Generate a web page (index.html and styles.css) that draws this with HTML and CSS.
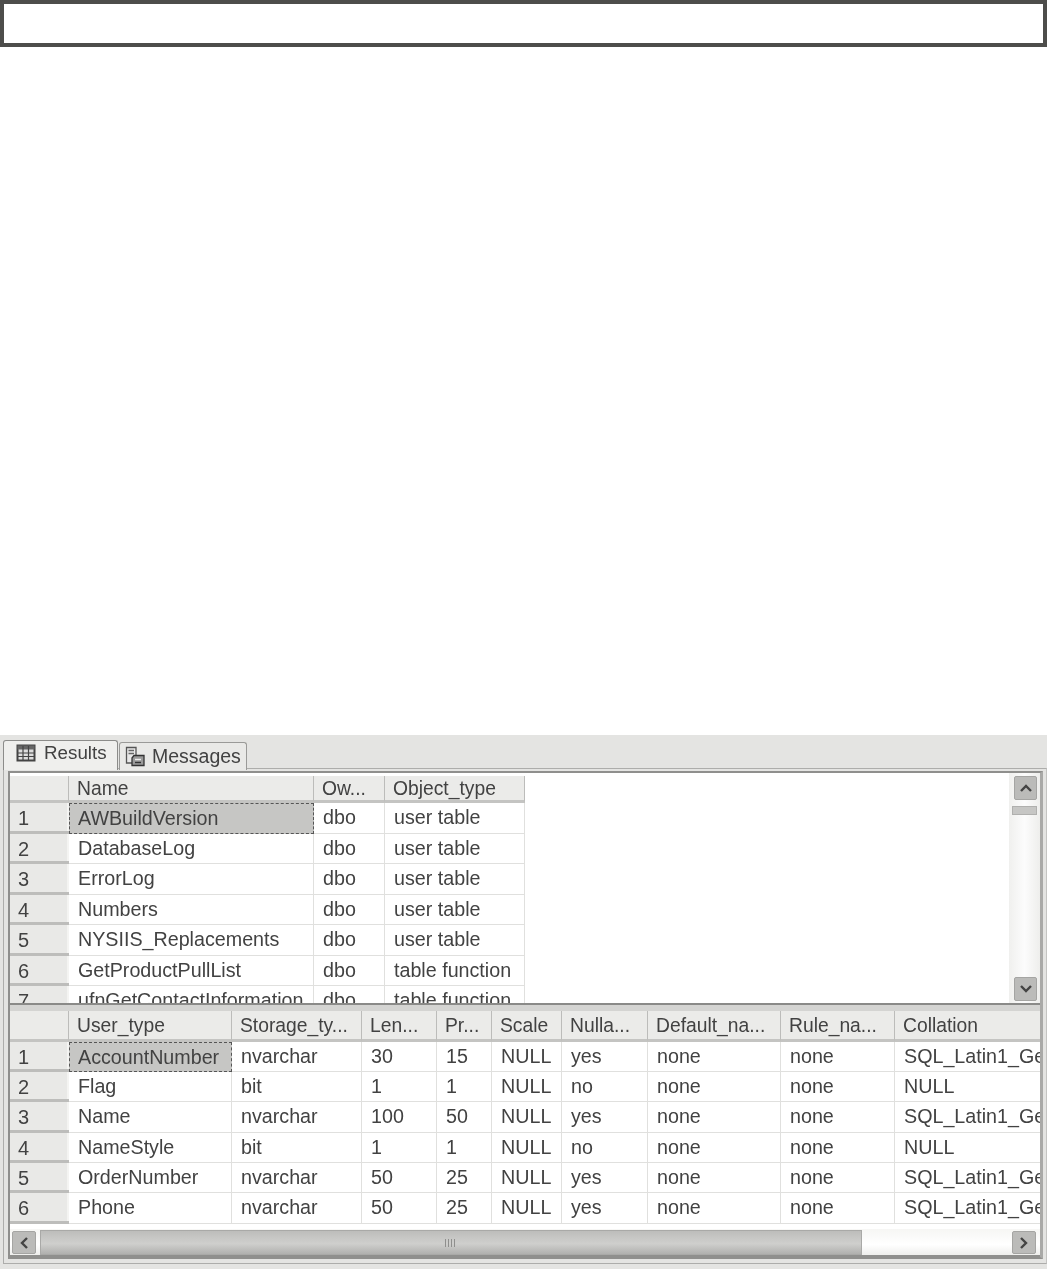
FILE: index.html
```html
<!DOCTYPE html>
<html lang="en">
<head>
<meta charset="utf-8">
<title>Results</title>
<link rel="stylesheet" href="styles.css">
</head>
<body>
<div class="topbox"></div>
<section class="panel">
  <div class="tabs">
    <div class="tab tab-active">
      <svg class="ico" width="20" height="18" viewBox="0 0 20 18"><rect x="1.5" y="1.5" width="17" height="15" fill="#ddd" stroke="#444" stroke-width="2"/><rect x="1.5" y="1.5" width="17" height="4" fill="#666"/><path d="M1.5 9H18.5M1.5 12.5H18.5M7 2V16M12.5 2V16" stroke="#444" stroke-width="1.2" fill="none"/></svg>
      <span>Results</span>
    </div>
    <div class="tab tab-msg">
      <svg class="ico" width="22" height="21" viewBox="0 0 22 21"><path d="M1.5 1.5H11V17H1.5Z" fill="#e8e8e8" stroke="#555" stroke-width="1.3"/><path d="M3.5 4.5H9M3.5 7.5H9" stroke="#666" stroke-width="1.4"/><path d="M7 12L9 9.5H19V19.5H7Z" fill="#9a9a9a" stroke="#333" stroke-width="1.3"/><path d="M10 13.5H16" stroke="#eee" stroke-width="1.4"/><path d="M10 16.5H16" stroke="#333" stroke-width="1.4"/></svg>
      <span>Messages</span>
    </div>
  </div>
  <div class="page">
    <div class="frame">
      <div class="pane pane-top">
        <div class="grid grid-top">
          <div class="hd"></div><div class="hd">Name</div><div class="hd">Ow...</div><div class="hd">Object_type</div>
          <div class="rh">1</div><div class="c sel">AWBuildVersion</div><div class="c">dbo</div><div class="c">user table</div>
          <div class="rh">2</div><div class="c">DatabaseLog</div><div class="c">dbo</div><div class="c">user table</div>
          <div class="rh">3</div><div class="c">ErrorLog</div><div class="c">dbo</div><div class="c">user table</div>
          <div class="rh">4</div><div class="c">Numbers</div><div class="c">dbo</div><div class="c">user table</div>
          <div class="rh">5</div><div class="c">NYSIIS_Replacements</div><div class="c">dbo</div><div class="c">user table</div>
          <div class="rh">6</div><div class="c">GetProductPullList</div><div class="c">dbo</div><div class="c">table function</div>
          <div class="rh">7</div><div class="c">ufnGetContactInformation</div><div class="c">dbo</div><div class="c">table function</div>
        </div>
        <div class="vscroll">
          <div class="sbtn"><svg width="16" height="10" viewBox="0 0 16 10"><path d="M3 8L8 3L13 8" fill="none" stroke="#444" stroke-width="2.4"/></svg></div>
          <div class="vthumb"></div>
          <div class="vtrack"></div>
          <div class="sbtn"><svg width="16" height="10" viewBox="0 0 16 10"><path d="M3 2L8 7L13 2" fill="none" stroke="#444" stroke-width="2.4"/></svg></div>
        </div>
      </div>
      <div class="pane pane-bottom">
        <div class="grid grid-bottom">
          <div class="hd"></div><div class="hd">User_type</div><div class="hd">Storage_ty...</div><div class="hd">Len...</div><div class="hd">Pr...</div><div class="hd">Scale</div><div class="hd">Nulla...</div><div class="hd">Default_na...</div><div class="hd">Rule_na...</div><div class="hd">Collation</div>
          <div class="rh">1</div><div class="c sel">AccountNumber</div><div class="c">nvarchar</div><div class="c">30</div><div class="c">15</div><div class="c">NULL</div><div class="c">yes</div><div class="c">none</div><div class="c">none</div><div class="c">SQL_Latin1_General</div>
          <div class="rh">2</div><div class="c">Flag</div><div class="c">bit</div><div class="c">1</div><div class="c">1</div><div class="c">NULL</div><div class="c">no</div><div class="c">none</div><div class="c">none</div><div class="c">NULL</div>
          <div class="rh">3</div><div class="c">Name</div><div class="c">nvarchar</div><div class="c">100</div><div class="c">50</div><div class="c">NULL</div><div class="c">yes</div><div class="c">none</div><div class="c">none</div><div class="c">SQL_Latin1_General</div>
          <div class="rh">4</div><div class="c">NameStyle</div><div class="c">bit</div><div class="c">1</div><div class="c">1</div><div class="c">NULL</div><div class="c">no</div><div class="c">none</div><div class="c">none</div><div class="c">NULL</div>
          <div class="rh">5</div><div class="c">OrderNumber</div><div class="c">nvarchar</div><div class="c">50</div><div class="c">25</div><div class="c">NULL</div><div class="c">yes</div><div class="c">none</div><div class="c">none</div><div class="c">SQL_Latin1_General</div>
          <div class="rh">6</div><div class="c">Phone</div><div class="c">nvarchar</div><div class="c">50</div><div class="c">25</div><div class="c">NULL</div><div class="c">yes</div><div class="c">none</div><div class="c">none</div><div class="c">SQL_Latin1_General</div>
        </div>
        <div class="hscroll">
          <div class="sbtn hbtn"><svg width="10" height="16" viewBox="0 0 10 16"><path d="M8 3L3 8L8 13" fill="none" stroke="#444" stroke-width="2.4"/></svg></div>
          <div class="hthumb"><span class="grip"></span></div>
          <div class="htrack"></div>
          <div class="sbtn hbtn"><svg width="10" height="16" viewBox="0 0 10 16"><path d="M2 3L7 8L2 13" fill="none" stroke="#444" stroke-width="2.4"/></svg></div>
        </div>
      </div>
    </div>
  </div>
</section>
</body>
</html>
```
FILE: styles.css
```css
* { box-sizing: border-box; }
html, body { margin: 0; padding: 0; background: #fff; }
body { width: 1047px; height: 1269px; overflow: hidden; font-family: "Liberation Sans", Arial, sans-serif; color: #424242; }
.topbox { height: 47px; border: 4px solid #4d4d4b; background: #fff; }
.panel { margin-top: 688px; height: 534px; background: #e4e4e2; padding: 5px 0 0 3px; filter: blur(0.6px); }
.tabs { display: flex; height: 30px; font-size: 18.8px; position: relative; z-index: 1; margin-bottom: -2px; }
.tab { display: flex; align-items: center; gap: 5px; border: 1px solid #9a9a98; border-bottom: none; border-radius: 3px 3px 0 0; }
.tab-active { background: #efefed; height: 30px; width: 115px; padding: 0 0 5px 12px; gap: 8px; border-color: #8c8c8a; }
.tab-msg { background: #e9e9e7; height: 28px; margin-top: 2px; margin-left: 1px; width: 128px; padding: 0 4px 0 5px; font-size: 19.5px; }
.ico { flex: none; }
.page { height: 496px; width: 1044px; border: 1px solid #adadab; border-right-color: #c4c4c2; padding: 2px 3px 0 4px; }
.frame { height: 488px; border: 2px solid #8f8f8d; border-right: 3px solid #a9a9a7; background: #fff; display: flex; flex-direction: column; }
.pane { display: flex; overflow: hidden; background: #fff; }
.pane-top { height: 232px; flex: none; border-bottom: 2px solid #8a8a88; }
.pane-bottom { flex: 1; flex-direction: column; border-top: 6px solid #d4d4d2; box-shadow: inset 0 1px 0 #aaaaa8; }
.grid { display: grid; font-size: 19.7px; align-content: start; flex: 1; overflow: hidden; }
.grid-top { grid-template-columns: 59px 245px 71px 140px; grid-template-rows: 27px repeat(7, 30.5px); padding-top: 3px; background: #fff; }
.grid-bottom { grid-template-columns: 59px 163px 130px 75px 55px 70px 86px 133px 114px 146px; grid-template-rows: 30.5px repeat(6, 30.4px); height: 213px; flex: none; }
.hd { background: #ebebe9; border-right: 1px solid #bcbcba; border-bottom: 3px solid #c4c4c2; line-height: 25px; padding-left: 8px; white-space: nowrap; overflow: hidden; font-size: 19.3px; }
.grid-bottom .hd { line-height: 30px; }
.c { border-right: 1px solid #e0e0de; border-bottom: 1px solid #e0e0de; background: #fff; line-height: 29px; padding-left: 9px; white-space: nowrap; overflow: hidden; }
.rh { background: #e9e9e7; border-bottom: 3px solid #bdbdbb; box-shadow: inset -2px 0 0 #f4f4f2; line-height: 30px; padding-left: 8px; font-size: 20px; overflow: hidden; }
.sel { background: #c6c6c4; border: 1px dashed #555; padding-left: 8px; line-height: 28px; }
.vscroll { width: 31px; flex: none; display: flex; flex-direction: column; padding: 3px 3px 2px 5px; background: linear-gradient(to right, #f0f0ee, #fcfcfc 50%, #eeeeec); }
.sbtn { flex: none; background: #bbbbb9; border: 1px solid #a5a5a3; display: flex; align-items: center; justify-content: center; }
.vscroll .sbtn { height: 24px; border-radius: 2px; }
.vthumb { height: 9px; margin: 6px 0 0 -2px; flex: none; background: #c6c6c4; border: 1px solid #b0b0ae; }
.vtrack { flex: 1; }
.hscroll { display: flex; height: 29px; margin-top: 5px; align-items: stretch; background: linear-gradient(to bottom, #f6f6f4, #fff 60%, #eeeeec); border-bottom: 2px solid #8f8f8d; padding: 2px 4px 1px 2px; }
.hbtn { width: 24px; border-radius: 2px; }
.hthumb { width: 822px; margin: -1px 0 -1px 4px; background: linear-gradient(to bottom, #bdbdbb, #cfcfcd 55%, #b0b0ae); border: 1px solid #a9a9a7; display: flex; align-items: center; justify-content: center; }
.grip { width: 12px; height: 8px; background: repeating-linear-gradient(to right, #8f8f8d 0 1px, transparent 1px 3px); }
.htrack { flex: 1; }
```
